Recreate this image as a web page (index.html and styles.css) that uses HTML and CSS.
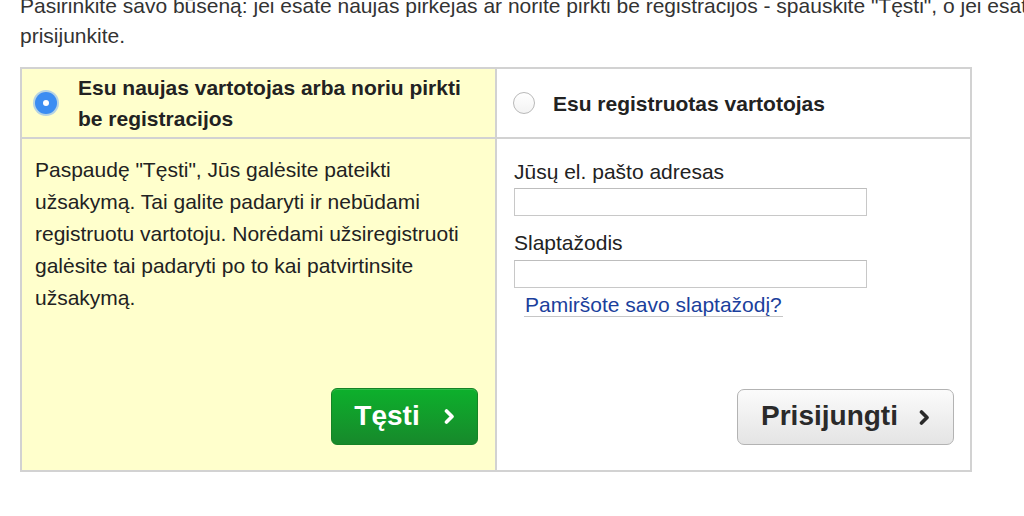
FILE: index.html
```html
<!DOCTYPE html>
<html lang="lt">
<head>
<meta charset="utf-8">
<link rel="stylesheet" href="styles.css">
</head>
<body>
<div class="page">
  <div class="intro">
    <div class="intro-line">Pasirinkite savo būseną: jei esate naujas pirkėjas ar norite pirkti be registracijos - spauskite "Tęsti", o jei esate registruotas vartotojas -</div>
    <div class="intro-line">prisijunkite.</div>
  </div>
  <div class="box">
    <div class="col col-new">
      <div class="col-head head-new">
        <span class="radio radio-on"></span>
        <span class="head-text">Esu naujas vartotojas arba noriu pirkti<br>be registracijos</span>
      </div>
      <div class="col-body body-new">
        <p class="info">Paspaudę "Tęsti", Jūs galėsite pateikti užsakymą. Tai galite padaryti ir nebūdami registruotu vartotoju. Norėdami užsiregistruoti galėsite tai padaryti po to kai patvirtinsite užsakymą.</p>
        <button class="btn btn-green" type="button">
          <span>Tęsti</span>
          <svg class="chev" width="11" height="15" viewBox="0 0 11 15"><polyline points="2.5,2 8,7.5 2.5,13" fill="none" stroke="currentColor" stroke-width="3.6" stroke-linecap="round" stroke-linejoin="round"/></svg>
        </button>
      </div>
    </div>
    <div class="col col-reg">
      <div class="col-head head-reg">
        <span class="radio radio-off"></span>
        <span class="head-text">Esu registruotas vartotojas</span>
      </div>
      <div class="col-body body-reg">
        <label class="lbl lbl-first">Jūsų el. pašto adresas</label>
        <input class="field" type="text">
        <label class="lbl lbl-second">Slaptažodis</label>
        <input class="field" type="password">
        <a class="forgot" href="#">Pamiršote savo slaptažodį?</a>
        <button class="btn btn-grey" type="button">
          <span>Prisijungti</span>
          <svg class="chev" width="11" height="15" viewBox="0 0 11 15"><polyline points="2.5,2 8,7.5 2.5,13" fill="none" stroke="currentColor" stroke-width="3.6" stroke-linecap="round" stroke-linejoin="round"/></svg>
        </button>
      </div>
    </div>
  </div>
</div>
</body>
</html>
```

FILE: styles.css
```css
html, body {
  margin: 0;
  padding: 0;
  background: #ffffff;
  overflow: hidden;
}
body {
  font-family: "Liberation Sans", Arial, Helvetica, sans-serif;
  color: #222222;
}
.page {
  padding-left: 20px;
  width: 952px;
}
.intro {
  margin-top: -9px;
  font-size: 21px;
  line-height: 30px;
  color: #333333;
  width: 1004px;
  overflow: hidden;
}
.intro-line {
  white-space: nowrap;
}
.box {
  margin-top: 16px;
  width: 948px;
  height: 401px;
  border: 2px solid #d2d2d2;
  display: grid;
  grid-template-columns: 475px 473px;
}
.col {
  display: flex;
  flex-direction: column;
}
.col-new {
  background: #ffffcc;
  border-right: 2px solid #d2d2d2;
}
.col-reg {
  background: #ffffff;
}
.col-head {
  height: 68px;
  border-bottom: 2px solid #d2d2d2;
  display: flex;
  align-items: center;
  font-weight: bold;
  font-size: 21px;
  line-height: 31px;
  color: #222222;
}
.head-new {
  padding-left: 13px;
  gap: 21px;
}
.head-reg {
  padding-left: 16px;
  gap: 18px;
}
.radio {
  flex: none;
  width: 22px;
  height: 22px;
  border-radius: 50%;
  box-sizing: border-box;
  position: relative;
}
.radio-on {
  background: #3b8df2;
  box-shadow: 0 0 0 2px rgba(120, 175, 245, 0.55);
}
.radio-on::after {
  content: "";
  position: absolute;
  left: 8px;
  top: 8px;
  width: 6px;
  height: 6px;
  border-radius: 50%;
  background: #ffffff;
}
.radio-off {
  border: 1px solid #b9b9b9;
  background: linear-gradient(#ffffff, #f3f3f3);
}
.col-body {
  flex: 1;
  display: flex;
  flex-direction: column;
}
.body-new {
  padding: 15px 17px 25px 13px;
}
.info {
  margin: 0;
  width: 445px;
  font-size: 21px;
  line-height: 32px;
  color: #222222;
}
.body-reg {
  padding: 22px 16px 25px 17px;
}
.lbl {
  display: block;
  font-size: 21px;
  line-height: 22px;
  color: #222222;
}
.lbl-second {
  margin-top: 16px;
}
.field {
  display: block;
  width: 353px;
  height: 28px;
  box-sizing: border-box;
  margin: 5px 0 0 0;
  padding: 0 4px;
  border: 1px solid #c8c8c8;
  border-top-color: #bdbdbd;
  background: #ffffff;
  font-family: inherit;
  font-size: 16px;
}
.lbl-second + .field {
  margin-top: 6px;
}
.forgot {
  align-self: flex-start;
  margin-left: 10px;
  margin-top: 6px;
  font-size: 21px;
  line-height: 22px;
  color: #1b3f9c;
  text-decoration: none;
  border-bottom: 1px solid #c6c6c6;
  padding: 0 1px;
}
.btn {
  margin-top: auto;
  align-self: flex-end;
  display: flex;
  align-items: center;
  justify-content: center;
  gap: 24px;
  box-sizing: border-box;
  font-family: inherit;
  font-weight: bold;
  font-size: 28px;
  cursor: pointer;
  padding: 0 0 2px 0;
}
.btn-green {
  width: 147px;
  height: 57px;
  border: 1px solid #168326;
  border-radius: 6px;
  background: linear-gradient(#0db02c, #17892b);
  color: #ffffff;
  box-shadow: inset 0 1px 0 rgba(255, 255, 255, 0.15);
}
.btn-grey {
  width: 217px;
  height: 56px;
  border: 1px solid #b3b3b3;
  border-radius: 7px;
  background: linear-gradient(#fbfbfb, #e4e4e4);
  color: #2a2a2a;
  gap: 21px;
}
.chev {
  display: block;
  margin-top: 2px;
}
```
